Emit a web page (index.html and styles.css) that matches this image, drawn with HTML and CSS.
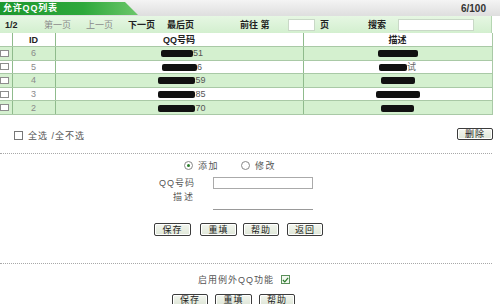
FILE: index.html
```html
<!DOCTYPE html>
<html>
<head>
<meta charset="utf-8">
<link rel="stylesheet" href="styles.css">
</head>
<body>
<div class="page">
  <div class="titlebar">
    <div class="tab">允许QQ列表</div>
    <div class="count">6/100</div>
  </div>
  <div class="toolbar">
    <span class="tb pg b">1/2</span>
    <span class="tb w42 dis">第一页</span>
    <span class="tb w42 dis">上一页</span>
    <span class="tb w39 b">下一页</span>
    <span class="tb w73 b">最后页</span>
    <span class="tb w48 b">前往 第</span>
    <span class="tb box small"></span>
    <span class="tb w48 b">页</span>
    <span class="tb w30 b">搜索</span>
    <span class="tb box wide"></span>
  </div>
  <table class="list">
    <colgroup><col class="c0"><col class="c1"><col class="c2"><col class="c3"></colgroup>
    <tr class="head"><th></th><th>ID</th><th>QQ号码</th><th>描述</th></tr>
    <tr class="g"><td><span class="cb"></span></td><td class="id">6</td><td class="qq"><span class="red w32"></span>51</td><td class="desc"><span class="red w40"></span></td></tr>
    <tr class="w"><td><span class="cb"></span></td><td class="id">5</td><td class="qq"><span class="red w35"></span>6</td><td class="desc"><span class="red w28"></span><span class="faint">试</span></td></tr>
    <tr class="g"><td><span class="cb"></span></td><td class="id">4</td><td class="qq"><span class="red w37"></span>59</td><td class="desc"><span class="red w34"></span></td></tr>
    <tr class="w"><td><span class="cb"></span></td><td class="id">3</td><td class="qq"><span class="red w37"></span>85</td><td class="desc"><span class="red w44"></span></td></tr>
    <tr class="g"><td><span class="cb"></span></td><td class="id">2</td><td class="qq"><span class="red w37"></span>70</td><td class="desc"><span class="red w33"></span></td></tr>
  </table>
  <div class="selectrow">
    <label class="selall"><span class="cb2"></span>全选 /全不选</label>
    <span class="btn del">删除</span>
  </div>
  <div class="dots"></div>
  <div class="editor">
    <div class="radios">
      <span class="radio on"></span><span class="rlabel">添加</span>
      <span class="radio"></span><span class="rlabel">修改</span>
    </div>
    <div class="field qqf">
      <span class="flabel">QQ号码</span>
      <span class="input"></span>
    </div>
    <div class="field descf">
      <span class="flabel">描述</span>
      <span class="input line"></span>
    </div>
    <div class="buttons b1">
      <span class="btn">保存</span>
      <span class="btn">重填</span>
      <span class="btn">帮助</span>
      <span class="btn">返回</span>
    </div>
  </div>
  <div class="dots"></div>
  <div class="enable">
    <span class="elabel">启用例外QQ功能</span>
    <span class="chk"><svg width="8" height="8" viewBox="0 0 8 8"><path d="M1 4 L3.2 6.2 L7 1.6" fill="none" stroke="#2a7a2a" stroke-width="1.4"/></svg></span>
  </div>
  <div class="buttons b2">
    <span class="btn">保存</span>
    <span class="btn">重填</span>
    <span class="btn">帮助</span>
  </div>
</div>
</body>
</html>
```

FILE: styles.css
```css
html, body {
  margin: 0;
  padding: 0;
  background: #fff;
  overflow: hidden;
}
.page {
  width: 500px;
  height: 304px;
  font-family: "Liberation Sans", "Noto Sans CJK SC", sans-serif;
  font-size: 9px;
  color: #333;
}
.b { font-weight: bold; color: #222; }

/* title bar */
.titlebar {
  height: 16px;
  display: flex;
  align-items: flex-end;
  background: linear-gradient(to bottom, #f4f4f4, #dedede);
}
.tab {
  width: 138px;
  height: 13px;
  box-sizing: border-box;
  padding-left: 3px;
  line-height: 13px;
  color: #fff;
  font-weight: bold;
  font-size: 9px;
  letter-spacing: 0.8px;
  background: linear-gradient(to right, #1c972e, #2ea83c 60%, #6cc76a);
  clip-path: polygon(0 0, 125px 0, 138px 100%, 0 100%);
  margin-bottom: 1px;
}
.count {
  margin-left: auto;
  margin-right: 14px;
  align-self: center;
  font-weight: bold;
  font-size: 10px;
  color: #333;
}

/* toolbar */
.toolbar {
  width: 492px;
  height: 17px;
  box-sizing: border-box;
  display: flex;
  align-items: center;
  padding-left: 5px;
  background: linear-gradient(to bottom, #e6f7e3, #d3efcf);
  border-right: 1px solid #b5d6b2;
}
.tb { flex-shrink: 0; display: block; }
.pg { width: 39px; }
.w42 { width: 42px; }
.w39 { width: 39px; }
.w73 { width: 73px; }
.w48 { width: 48px; }
.w30 { width: 30px; }
.dis { color: #8a8a8a; }
.box {
  height: 12px;
  background: #fff;
  border: 1px solid #c9d8c7;
  box-sizing: border-box;
}
.box.small { width: 27px; margin-right: 5px; }
.box.wide { width: 76px; }

/* list */
.list {
  width: 492px;
  border-collapse: collapse;
  table-layout: fixed;
}
.c0 { width: 12px; }
.c1 { width: 43px; }
.c2 { width: 248px; }
.c3 { width: 189px; }
.list th, .list td {
  padding: 0;
  text-align: center;
  border-left: 1px solid #8fbb8c;
  border-bottom: 1px solid #a9c9a6;
  white-space: nowrap;
  overflow: hidden;
}
.list th:first-child, .list td:first-child { border-left: none; text-align: left; }
.list tr > :last-child { border-right: 1px solid #a9c9a6; }
.head th {
  height: 13px;
  background: #fff;
  font-weight: bold;
  color: #222;
  font-size: 9px;
}
.list tr.g td, .list tr.w td { height: 12.6px; line-height: 12px; }
.g td { background: #d4f0cf; }
.w td { background: #fff; }
.cb {
  display: block;
  width: 9px;
  height: 7px;
  margin-left: 0;
  background: #fff;
  border: 1px solid #8d8d8d;
  box-sizing: border-box;
}
.id { color: #8a8a8a; }
.qq { color: #555; }
.red {
  display: inline-block;
  height: 7px;
  background: #111;
  border-radius: 2px;
  vertical-align: -1px;
}
.w28 { width: 28px; }
.w32 { width: 32px; }
.w33 { width: 33px; }
.w34 { width: 34px; }
.w35 { width: 35px; }
.w37 { width: 37px; }
.w40 { width: 40px; }
.w44 { width: 44px; }
.faint { color: #666; }
.qq .red { margin-left: 6px; }

/* select row */
.selectrow {
  height: 38px;
  display: flex;
  align-items: flex-start;
  box-sizing: border-box;
  padding-top: 13px;
}
.selall {
  display: flex;
  align-items: center;
  margin-left: 14px;
  margin-top: 3px;
  color: #555;
  font-size: 9px;
  letter-spacing: 1px;
  height: 10px;
}
.cb2 {
  width: 9px;
  height: 9px;
  box-sizing: border-box;
  border: 1px solid #777;
  background: #fff;
  margin-right: 5px;
}
.btn {
  display: flex;
  align-items: center;
  justify-content: center;
  height: 13px;
  box-sizing: border-box;
  border: 1px solid #3c3c3c;
  border-radius: 2px;
  background: linear-gradient(to bottom, #f3f6ef, #dfe7d8);
  box-shadow: inset 0 0 0 1px #fff;
  font-size: 9px;
  letter-spacing: 1px;
  color: #222;
}
.del {
  margin-left: auto;
  margin-right: 7px;
  width: 36px;
  height: 12px;
}

.dots {
  width: 492px;
  border-top: 1px dotted #a8a8a8;
}

/* editor */
.editor {
  height: 109px;
  box-sizing: border-box;
  padding-top: 6px;
}
.radios {
  display: flex;
  align-items: center;
  height: 12px;
  padding-left: 184px;
}
.radio {
  width: 9px;
  height: 9px;
  border: 1px solid #888;
  border-radius: 50%;
  box-sizing: border-box;
  background: #fff;
  position: relative;
}
.radio.on::after {
  content: "";
  position: absolute;
  left: 2px;
  top: 2px;
  width: 3px;
  height: 3px;
  border-radius: 50%;
  background: #2b7d2b;
}
.rlabel { margin-left: 5px; margin-right: 22px; color: #555; letter-spacing: 1.5px; }
.field {
  display: flex;
}
.flabel {
  width: 195px;
  text-align: right;
  color: #555;
  letter-spacing: 1px;
}
.qqf {
  margin-top: 5px;
  height: 12px;
  align-items: center;
}
.qqf .input {
  margin-left: 18px;
  width: 100px;
  height: 12px;
  box-sizing: border-box;
  border: 1px solid #aaa;
  background: #fff;
}
.descf {
  margin-top: 1px;
  align-items: flex-start;
}
.descf .flabel { line-height: 12px; margin-top: 1px; letter-spacing: 2px; }
.descf .input {
  margin-left: 18px;
  margin-top: 8px;
  width: 100px;
  height: 12px;
  box-sizing: border-box;
  border-bottom: 1px solid #999;
}
.buttons {
  display: flex;
}
.b1 {
  margin-top: 13px;
  padding-left: 154px;
}
.b1 .btn:nth-child(1) { width: 37px; }
.b1 .btn:nth-child(2) { width: 37px; margin-left: 9px; }
.b1 .btn:nth-child(3) { width: 36px; margin-left: 6px; }
.b1 .btn:nth-child(4) { width: 36px; margin-left: 8px; }

.enable {
  display: flex;
  align-items: center;
  height: 10px;
  margin-top: 11px;
  padding-left: 198px;
}
.elabel { color: #555; letter-spacing: 1px; }
.chk {
  width: 9px;
  height: 9px;
  margin-left: 7px;
  box-sizing: border-box;
  border: 1px solid #5b8f5b;
  background: #f2f8ef;
  display: flex;
  align-items: center;
  justify-content: center;
}
.b2 {
  margin-top: 9px;
  padding-left: 172px;
}
.b2 .btn { width: 36px; height: 12px; }
.b2 .btn:nth-child(2) { margin-left: 7px; width: 37px; }
.b2 .btn:nth-child(3) { margin-left: 7px; }
```
